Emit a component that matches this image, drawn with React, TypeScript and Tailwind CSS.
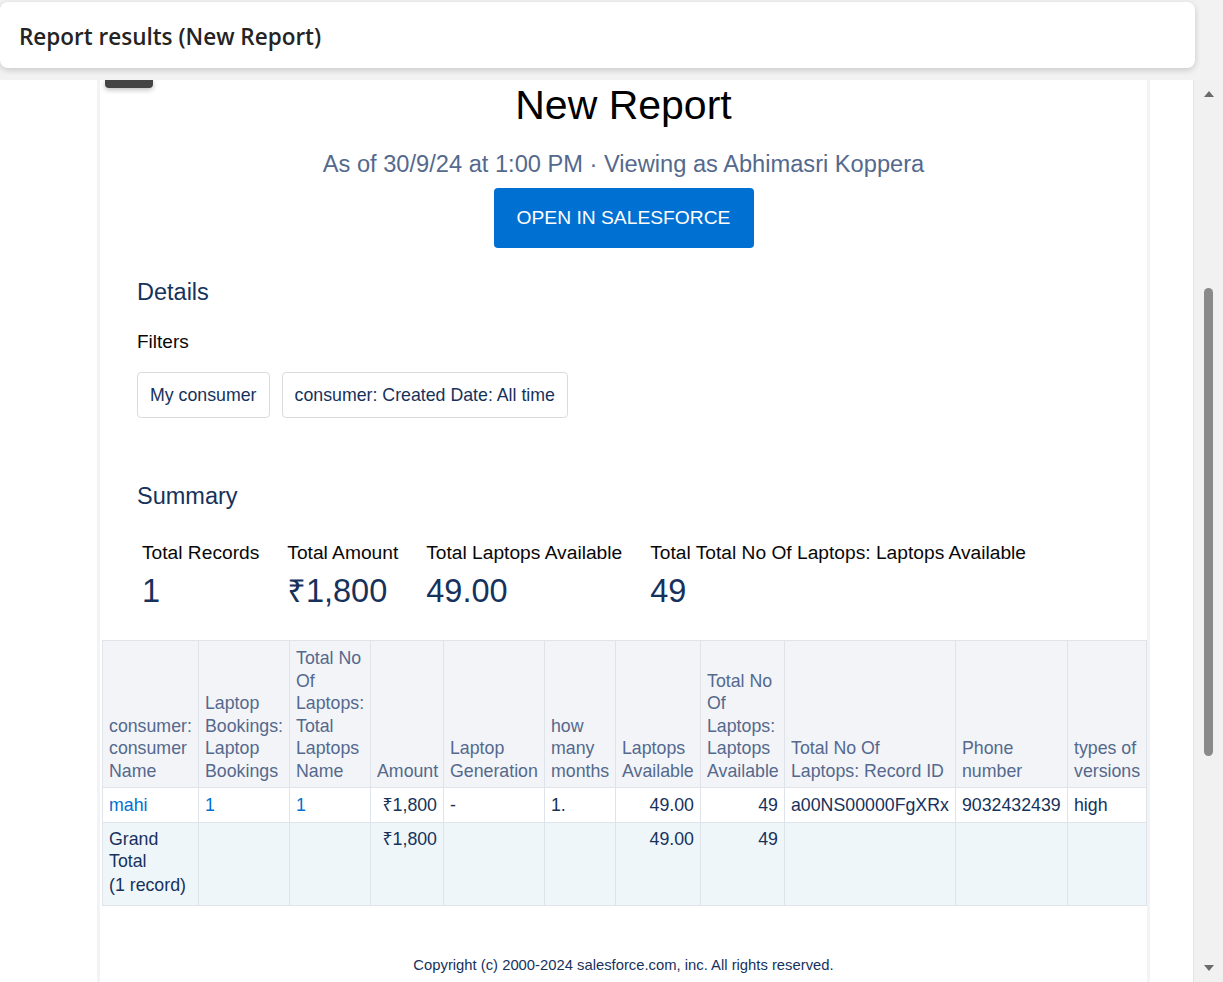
import React from 'react';

const headers: { lines: string[]; w: number }[] = [
  { lines: ['consumer:', 'consumer', 'Name'], w: 96 },
  { lines: ['Laptop', 'Bookings:', 'Laptop', 'Bookings'], w: 91 },
  { lines: ['Total No', 'Of', 'Laptops:', 'Total', 'Laptops', 'Name'], w: 81 },
  { lines: ['Amount'], w: 73 },
  { lines: ['Laptop', 'Generation'], w: 101 },
  { lines: ['how', 'many', 'months'], w: 71 },
  { lines: ['Laptops', 'Available'], w: 85 },
  { lines: ['Total No', 'Of', 'Laptops:', 'Laptops', 'Available'], w: 84 },
  { lines: ['Total No Of', 'Laptops: Record ID'], w: 171 },
  { lines: ['Phone', 'number'], w: 112 },
  { lines: ['types of', 'versions'], w: 79 },
];

const row: { v: string; link?: boolean; right?: boolean }[] = [
  { v: 'mahi', link: true },
  { v: '1', link: true },
  { v: '1', link: true },
  { v: '₹1,800', right: true },
  { v: '-' },
  { v: '1.' },
  { v: '49.00', right: true },
  { v: '49', right: true },
  { v: 'a00NS00000FgXRx' },
  { v: '9032432439' },
  { v: 'high' },
];

const totals = ['', '', '', '₹1,800', '', '', '49.00', '49', '', '', ''];

const summary = [
  { label: 'Total Records', value: '1' },
  { label: 'Total Amount', value: '₹1,800' },
  { label: 'Total Laptops Available', value: '49.00' },
  { label: 'Total Total No Of Laptops: Laptops Available', value: '49' },
];

export default function App() {
  return (
    <div
      className="w-[1223px] h-[982px] overflow-hidden bg-[#f2f2f2] flex flex-col"
      style={{ fontFamily: '"Liberation Sans", "Noto Sans", Arial, sans-serif' }}
    >
      {/* top card */}
      <div className="mt-[2px] w-[1195px] h-[66px] shrink-0 bg-white rounded-lg shadow-[0_2px_6px_rgba(0,0,0,0.18)] flex items-center pl-[19px] pt-[3px] z-10">
        <h1
          className="text-[22.5px] font-semibold text-[#242424]"
          style={{ fontFamily: '"Open Sans", "Noto Sans", sans-serif' }}
        >
          Report results (New Report)
        </h1>
      </div>

      <div className="mt-[12px] flex flex-1 min-h-0">
        {/* scroll viewport */}
        <div className="w-[1193px] bg-white overflow-hidden">
          <div className="relative ml-[97px] w-[1053px] h-full border-x-[3px] border-[#f2f3f6] flex flex-col">
            <div className="absolute left-[5px] top-0 w-[48px] h-[8px] rounded-b-[4px] bg-[#444444] shadow-[0_2px_5px_rgba(0,0,0,0.25)]" />

            <h2 className="mt-[1px] text-center text-[41px] leading-[48px] text-black">New Report</h2>
            <p className="mt-[21px] text-center text-[23.65px] leading-[28px] text-[#54698d]">
              As of 30/9/24 at 1:00 PM · Viewing as Abhimasri Koppera
            </p>
            <div className="mt-[10px] flex justify-center">
              <button className="w-[260px] h-[60px] rounded-[4px] bg-[#0070d2] text-white text-[19.25px]">
                OPEN IN SALESFORCE
              </button>
            </div>

            <div className="pl-[37px]">
              <h3 className="mt-[30px] text-[23.5px] leading-[28px] text-[#16325c]">Details</h3>
              <p className="mt-[24px] text-[19px] leading-[24px] text-[#080707]">Filters</p>
              <div className="mt-[18px] flex gap-[12px]">
                {['My consumer', 'consumer: Created Date: All time'].map((f) => (
                  <span
                    key={f}
                    className="h-[46px] px-[12px] flex items-center border border-[#dddbda] rounded-[4px] text-[17.75px] text-[#16325c]"
                  >
                    {f}
                  </span>
                ))}
              </div>
              <h3 className="mt-[64px] text-[23.5px] leading-[28px] text-[#16325c]">Summary</h3>
            </div>

            <div className="mt-[31px] pl-[42px] flex gap-[28px]">
              {summary.map((s) => (
                <div key={s.label} className="flex flex-col">
                  <span className="text-[19.2px] leading-[24px] text-[#080707]">{s.label}</span>
                  <span className="mt-[7px] text-[32.5px] leading-[38px] text-[#16325c]">{s.value}</span>
                </div>
              ))}
            </div>

            <table className="mt-[30px] ml-[2px] w-[1044px] table-fixed border-collapse text-[17.75px] leading-[22.5px]">
              <colgroup>
                {headers.map((h, i) => (
                  <col key={i} style={{ width: h.w }} />
                ))}
              </colgroup>
              <thead>
                <tr className="bg-[#f3f4f8]">
                  {headers.map((h, i) => (
                    <th
                      key={i}
                      className="border border-[#dfe3ea] px-[6px] pt-[6px] pb-[5px] align-bottom text-left font-normal text-[#54698d] whitespace-nowrap"
                    >
                      {h.lines.map((l, j) => (
                        <div key={j}>{l}</div>
                      ))}
                    </th>
                  ))}
                </tr>
              </thead>
              <tbody>
                <tr className="bg-white">
                  {row.map((c, i) => (
                    <td
                      key={i}
                      className={`border border-[#dfe3ea] px-[6px] pt-[6px] pb-[5px] align-top whitespace-nowrap ${
                        c.right ? 'text-right' : 'text-left'
                      } ${c.link ? 'text-[#0070d2]' : 'text-[#16325c]'}`}
                    >
                      {c.v}
                    </td>
                  ))}
                </tr>
                <tr className="bg-[#eff6fa]">
                  {totals.map((t, i) => (
                    <td
                      key={i}
                      className="border border-[#dfe3ea] px-[6px] pt-[5px] pb-[9px] align-top text-right text-[#16325c] h-[83px]"
                    >
                      {i === 0 ? (
                        <div className="text-left">
                          <div>Grand</div>
                          <div>Total</div>
                          <div className="mt-[1px]">(1 record)</div>
                        </div>
                      ) : (
                        t
                      )}
                    </td>
                  ))}
                </tr>
              </tbody>
            </table>

            <p className="mt-[48px] text-center text-[14.8px] text-[#16325c]">
              Copyright (c) 2000-2024 salesforce.com, inc. All rights reserved.
            </p>
          </div>
        </div>

        {/* scrollbar */}
        <div className="w-[30px] border-l border-[#e3e3e3] bg-[#f1f1f1] flex flex-col items-center">
          <svg width="10" height="6" viewBox="0 0 10 6" className="mt-[11px] fill-[#6b6b6b]">
            <path d="M5 0 L10 6 L0 6 Z" />
          </svg>
          <div className="mt-[191px] w-[9px] h-[468px] rounded-full bg-[#8a8a8a]" />
          <div className="flex-1" />
          <svg width="10" height="6" viewBox="0 0 10 6" className="mb-[11px] fill-[#6b6b6b]">
            <path d="M0 0 L10 0 L5 6 Z" />
          </svg>
        </div>
      </div>
    </div>
  );
}
